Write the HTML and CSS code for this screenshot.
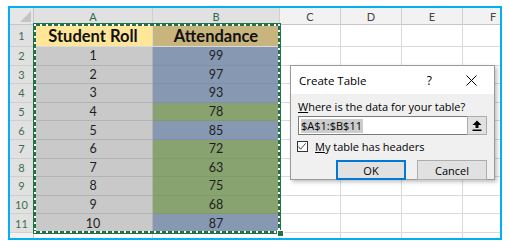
FILE: index.html
```html
<!DOCTYPE html>
<html lang="en">
<head>
    <meta charset="UTF-8">
    <meta name="viewport" content="width=device-width, initial-scale=1.0">
    <link rel="stylesheet" href="styles.css">
</head>
<body>
    <div class="frame">
        <div class="sheet">
            <div class="corner"><span class="tri"></span></div>
            <div class="col-head sel">A</div>
            <div class="col-head sel">B</div>
            <div class="col-head">C</div>
            <div class="col-head">D</div>
            <div class="col-head">E</div>
            <div class="col-head">F</div>

            <div class="row-head sel">1</div>
            <div class="cell title-a">Student Roll</div>
            <div class="cell title-b">Attendance</div>
            <div class="cell"></div><div class="cell"></div><div class="cell"></div><div class="cell"></div>

            <div class="row-head sel">2</div><div class="cell roll">1</div><div class="cell blue">99</div>
            <div class="cell"></div><div class="cell"></div><div class="cell"></div><div class="cell"></div>

            <div class="row-head sel">3</div><div class="cell roll">2</div><div class="cell blue">97</div>
            <div class="cell"></div><div class="cell"></div><div class="cell"></div><div class="cell"></div>

            <div class="row-head sel">4</div><div class="cell roll">3</div><div class="cell blue">93</div>
            <div class="cell"></div><div class="cell"></div><div class="cell"></div><div class="cell"></div>

            <div class="row-head sel">5</div><div class="cell roll">4</div><div class="cell green">78</div>
            <div class="cell"></div><div class="cell"></div><div class="cell"></div><div class="cell"></div>

            <div class="row-head sel">6</div><div class="cell roll">5</div><div class="cell blue">85</div>
            <div class="cell"></div><div class="cell"></div><div class="cell"></div><div class="cell"></div>

            <div class="row-head sel">7</div><div class="cell roll">6</div><div class="cell green">72</div>
            <div class="cell"></div><div class="cell"></div><div class="cell"></div><div class="cell"></div>

            <div class="row-head sel">8</div><div class="cell roll">7</div><div class="cell green">63</div>
            <div class="cell"></div><div class="cell"></div><div class="cell"></div><div class="cell"></div>

            <div class="row-head sel">9</div><div class="cell roll">8</div><div class="cell green">75</div>
            <div class="cell"></div><div class="cell"></div><div class="cell"></div><div class="cell"></div>

            <div class="row-head sel">10</div><div class="cell roll">9</div><div class="cell green">68</div>
            <div class="cell"></div><div class="cell"></div><div class="cell"></div><div class="cell"></div>

            <div class="row-head sel">11</div><div class="cell roll">10</div><div class="cell blue">87</div>
            <div class="cell"></div><div class="cell"></div><div class="cell"></div><div class="cell"></div>

            <div class="row-head"></div><div class="cell"></div><div class="cell"></div>
            <div class="cell"></div><div class="cell"></div><div class="cell"></div><div class="cell"></div>
        </div>

        <!-- copy marquee around A1:B11 -->
        <div class="marquee"><span class="handle"></span></div>

        <div class="dialog">
            <div class="dlg-title">
                <span class="dlg-name">Create Table</span>
                <span class="dlg-help">?</span>
                <svg class="dlg-close" width="11" height="11" viewBox="0 0 11 11">
                    <path d="M0.5 0.5 L10.5 10.5 M10.5 0.5 L0.5 10.5" stroke="#000" stroke-width="1" fill="none"/>
                </svg>
            </div>
            <div class="dlg-body">
                <div class="dlg-label"><u>W</u>here is the data for your table?</div>
                <div class="range-row">
                    <div class="range-input"><span class="range-text">$A$1:$B$11</span></div>
                    <div class="range-btn">
                        <svg width="10" height="11" viewBox="0 0 10 11">
                            <path d="M5 0.5 L9.5 5 L6.5 5 L6.5 8 L3.5 8 L3.5 5 L0.5 5 Z" fill="#000"/>
                            <rect x="0.5" y="9.5" width="9" height="1.5" fill="#000"/>
                        </svg>
                    </div>
                </div>
                <div class="check-row">
                    <span class="checkbox">
                        <svg width="11" height="11" viewBox="0 0 11 11">
                            <path d="M1.5 5.5 L4 8.5 L9.5 2" stroke="#333" stroke-width="1" fill="none"/>
                        </svg>
                    </span>
                    <span class="check-label"><u>M</u>y table has headers</span>
                </div>
                <div class="dlg-buttons">
                    <button class="btn ok">OK</button>
                    <button class="btn">Cancel</button>
                </div>
            </div>
        </div>
    </div>
</body>
</html>
```

FILE: styles.css
```css
body {
    margin: 0;
    background-color: #ffffff;
    font-family: Lato, "Liberation Sans", sans-serif;
}
.frame {
    position: relative;
    margin: 6px 0 0 8px;
    width: 490px;
    height: 230px;
    border: 2px solid #00b0f0;
    overflow: hidden;
}
.sheet {
    display: grid;
    grid-template-columns: 24px 119px 127px 61px 61px 61px 61px;
    grid-template-rows: 17px 22px repeat(10, 18.6px) 20px;
}
.sheet > div {
    box-sizing: border-box;
    display: flex;
    align-items: center;
    justify-content: center;
}
.corner {
    position: relative;
    background-color: #e6e6e6;
    border-right: 1px solid #c6c6c6;
    border-bottom: 1px solid #c6c6c6;
}
.corner .tri {
    position: absolute;
    right: 2px;
    bottom: 2px;
    width: 11px;
    height: 11px;
    background-color: #c4c4c4;
    clip-path: polygon(100% 0, 100% 100%, 0 100%);
}
.col-head {
    background-color: #f2f2f2;
    border-right: 1px solid #d0d0d0;
    border-bottom: 1px solid #c6c6c6;
    font-size: 11px;
    color: #444444;
}
.col-head.sel {
    background-color: #e1e1e1;
    color: #2f6a4c;
}
.row-head {
    background-color: #f2f2f2;
    border-right: 1px solid #c6c6c6;
    border-bottom: 1px solid #d0d0d0;
    font-size: 11px;
    color: #444444;
}
.row-head.sel {
    background-color: #e1e1e1;
    color: #3c6e4f;
}
.cell {
    border-right: 1px solid #dadada;
    border-bottom: 1px solid #dadada;
    font-size: 12.5px;
    color: #1e1e1e;
}
.title-a {
    background-color: #ffe699;
    font-size: 16.5px;
    font-weight: bold;
    color: #111111;
}
.title-b {
    background-color: #c8b47d;
    font-size: 16.5px;
    font-weight: bold;
    color: #111111;
}
.roll {
    background-color: #c9c9c9;
    border-bottom-color: #b3b3b3;
    border-right-color: #b3b3b3;
}
.blue {
    background-color: #8798b2;
    border-bottom-color: #8090a8;
}
.green {
    background-color: #88a36f;
    border-bottom-color: #809b68;
}
.marquee {
    position: absolute;
    left: 23px;
    top: 15px;
    width: 242px;
    height: 205px;
    border: 3px solid #217346;
}
.marquee::after {
    content: "";
    position: absolute;
    left: -2px;
    top: -2px;
    right: -2px;
    bottom: -2px;
    background:
        repeating-linear-gradient(90deg, #ffffff 0 2px, transparent 2px 6px) left top / 100% 2px no-repeat,
        repeating-linear-gradient(90deg, #ffffff 0 2px, transparent 2px 6px) left bottom / 100% 2px no-repeat,
        repeating-linear-gradient(180deg, #ffffff 0 2px, transparent 2px 6px) left top / 2px 100% no-repeat,
        repeating-linear-gradient(180deg, #ffffff 0 2px, transparent 2px 6px) right top / 2px 100% no-repeat;
}
.handle {
    position: absolute;
    right: -6px;
    bottom: -6px;
    width: 5px;
    height: 5px;
    background-color: #217346;
    border: 1px solid #ffffff;
    z-index: 1;
}
.dialog {
    position: absolute;
    left: 280px;
    top: 57px;
    width: 203px;
    height: 113px;
    border: 1px solid #9a9a9a;
    background-color: #f0f0f0;
    box-shadow: 2px 2px 4px rgba(0, 0, 0, 0.25);
    font-family: "Open Sans", "Noto Sans", sans-serif;
    font-size: 11px;
    color: #000000;
}
.dlg-title {
    display: flex;
    align-items: center;
    height: 28px;
    padding: 0 0 0 8px;
    background-color: #ffffff;
}
.dlg-name {
    font-size: 11.5px;
    flex: 1;
}
.dlg-help {
    font-size: 12px;
    margin-right: 34px;
}
.dlg-close {
    margin-right: 17px;
}
.dlg-body {
    padding: 4px 7px 0 7px;
}
.dlg-label {
    height: 17px;
    line-height: 17px;
}
.range-row {
    display: flex;
    height: 19px;
    margin-top: 1px;
}
.range-input {
    flex: 1;
    display: flex;
    align-items: center;
    padding-left: 2px;
    background-color: #ffffff;
    border: 1px solid #7a7a7a;
    border-right: none;
}
.range-text {
    background-color: #cccccc;
    line-height: 14px;
    padding-right: 1px;
}
.range-btn {
    width: 20px;
    display: flex;
    align-items: center;
    justify-content: center;
    background-color: #e1e1e1;
    border: 1px solid #adadad;
    box-sizing: border-box;
}
.check-row {
    display: flex;
    align-items: center;
    gap: 7px;
    margin-top: 4px;
    height: 14px;
}
.checkbox {
    width: 11px;
    height: 11px;
    box-sizing: border-box;
    border: 1px solid #333333;
    background-color: #ffffff;
    display: flex;
    margin-left: -1px;
}
.checkbox svg {
    margin: -1px 0 0 -1px;
}
.dlg-buttons {
    display: flex;
    justify-content: flex-end;
    gap: 11px;
    margin-top: 7px;
}
.btn {
    width: 70px;
    height: 20px;
    padding: 0;
    font-family: "Open Sans", "Noto Sans", sans-serif;
    font-size: 11px;
    color: #000000;
    background-color: #e1e1e1;
    border: 1px solid #adadad;
}
.btn.ok {
    border: 2px solid #0078d7;
}
```
